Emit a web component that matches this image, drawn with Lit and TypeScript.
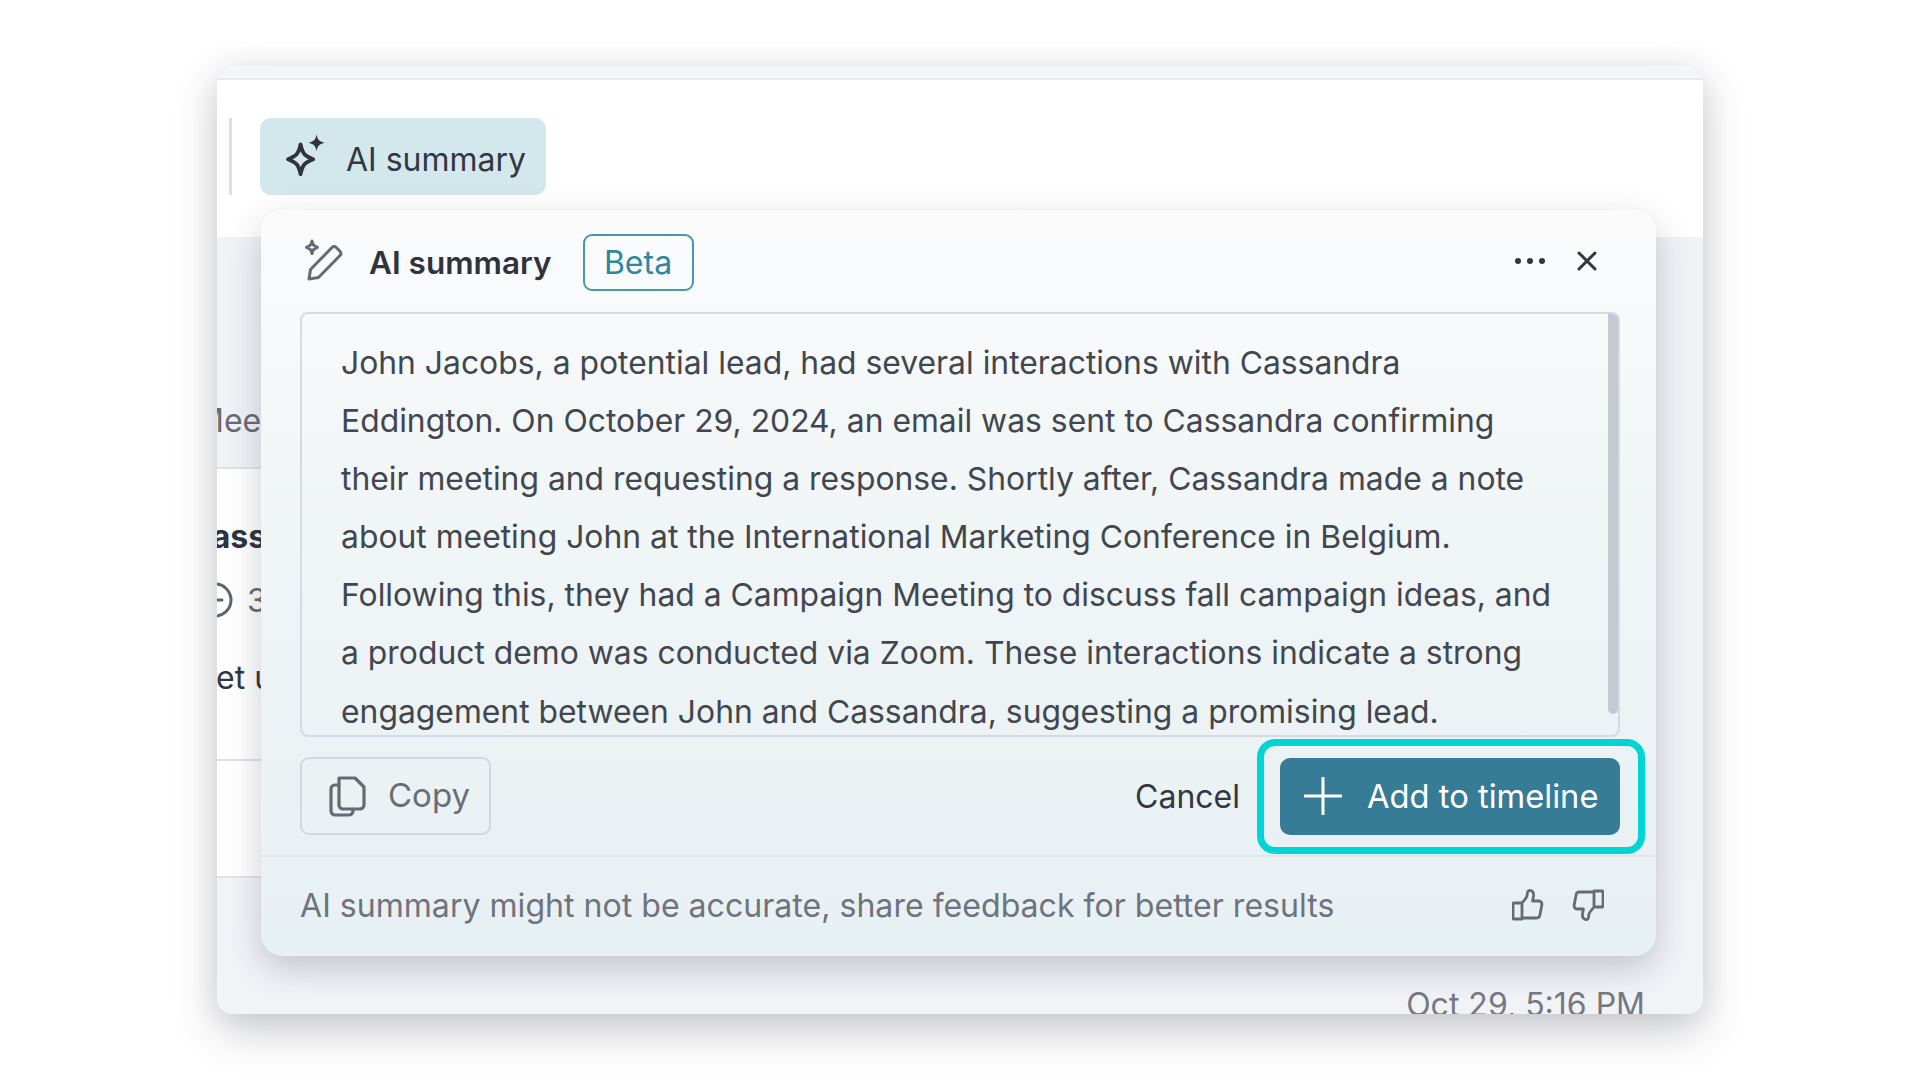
import { LitElement, html, svg, css } from "lit";
import { customElement } from "lit/decorators.js";

const LINES = [
  "John Jacobs, a potential lead, had several interactions with Cassandra",
  "Eddington. On October 29, 2024, an email was sent to Cassandra confirming",
  "their meeting and requesting a response. Shortly after, Cassandra made a note",
  "about meeting John at the International Marketing Conference in Belgium.",
  "Following this, they had a Campaign Meeting to discuss fall campaign ideas, and",
  "a product demo was conducted via Zoom. These interactions indicate a strong",
  "engagement between John and Cassandra, suggesting a promising lead.",
];

const thumb = svg`<path d="M10 14l4-5c1-1.200 1.400-3 1.400-5 0-2 2-3 3.800-2.200 2 .9 2.600 3 2.300 5.200l-.9 5h6.200c2.200 0 3.400 1.800 3 4l-2 10.600c-.3 1.600-1.500 2.400-3 2.400H10zM2 14h8v16H2c-.6 0-1-.4-1-1V15c0-.6.4-1 1-1z"/>`;

@customElement("app-root")
export class AppRoot extends LitElement {
  static styles = css`
    :host { display: block; width: 1920px; height: 1080px; background: #fff; overflow: hidden; font-family: "Inter", "Noto Sans", sans-serif; color: #33373f; padding: 66px 0 0 217px; box-sizing: border-box; }
    svg { display: block; flex: none; fill: none; stroke-linecap: round; stroke-linejoin: round; }
    .window { position: relative; width: 1486px; height: 948px; border-radius: 16px; background: #f1f2f6; box-shadow: 0 18px 44px rgba(45, 50, 65, .24), 0 0 30px rgba(45, 50, 65, .08); }
    .clip { display: flex; flex-direction: column; height: 100%; border-radius: 16px; overflow: hidden; }
    .strip { height: 12px; flex: none; background: #f3f5f9; border-bottom: 2px solid #e9ebf0; }
    .toolbar { height: 157px; flex: none; background: #fff; display: flex; align-items: flex-start; padding: 38px 0 0 12px; box-sizing: border-box; }
    .rule { width: 3px; height: 77px; background: #dcdfe6; }
    .chip { margin-left: 28px; width: 286px; height: 77px; background: #d3e8ed; border-radius: 11px; display: flex; align-items: center; padding-left: 21px; gap: 19px; box-sizing: border-box; font-size: 32px; color: #33373f; }
    .chip span { padding-top: 5px; }
    .row { flex: none; width: 800px; box-sizing: border-box; overflow: hidden; white-space: nowrap; color: #676b73; font-size: 32px; }
    .r1 { height: 232px; background: #f1f2f6; border-bottom: 2px solid #e0e2e8; padding: 164px 0 0 0; }
    .r1 span { display: block; margin-left: -22px; }
    .r2 { height: 292px; background: #fff; border-bottom: 2px solid #e0e2e8; padding: 48px 0 0 0; display: flex; flex-direction: column; }
    .r2 b { color: #2f333b; font-weight: 700; margin-left: -29px; }
    .meta { display: flex; align-items: center; margin: 24px 0 0 -22px; gap: 12px; height: 40px; }
    .set { margin: 38px 0 0 -1px; color: #33373f; }
    .r3 { height: 117px; background: #fff; border-bottom: 2px solid #e0e2e8; }
    .r4 { flex: 1; width: auto; display: flex; justify-content: flex-end; padding: 107px 58px 0 0; color: #757982; background: #f2f3f7; font-size: 32px; overflow: visible; }
    .panel { position: absolute; left: 44px; top: 144px; width: 1395px; height: 746px; border-radius: 22px; background: linear-gradient(180deg, #fbfbfc 0%, #f2f6f7 35%, #e7f0f3 100%); box-shadow: 0 12px 34px rgba(45, 50, 65, .24); display: flex; flex-direction: column; }
    .head { height: 102px; flex: none; display: flex; align-items: center; padding: 0 0 0 41px; box-sizing: border-box; }
    .title { font-weight: 600; font-size: 31.500px; margin: 2px 0 0 23px; color: #2f333b; }
    .beta { margin: 2px 0 0 31px; width: 111px; height: 57px; box-sizing: border-box; border: 2px solid #4b96ac; border-radius: 9px; color: #2f86a0; font-size: 32px; display: flex; align-items: center; justify-content: center; }
    .more { margin-left: auto; }
    .close { margin: 0 58px 0 30px; }
    .box { margin: 0 36px 0 39px; height: 425px; flex: none; box-sizing: border-box; border: 2px solid #d6dae2; border-radius: 8px; padding: 20px 0 0 39px; position: relative; overflow: hidden; }
    .line { height: 58.100px; line-height: 58.100px; font-size: 31.850px; white-space: nowrap; color: #42464e; }
    .scroll { position: absolute; top: -2px; right: 0; width: 10px; height: 402px; background: #c5c9d2; border-radius: 0 4px 5px 5px; }
    .actions { height: 120px; flex: none; display: flex; align-items: center; padding: 0 36px 0 39px; border-bottom: 2px solid #dfe4ea; box-sizing: border-box; }
    .copy { width: 191px; height: 78px; box-sizing: border-box; border: 2px solid #d3d8de; border-radius: 9px; display: flex; align-items: center; padding-left: 27px; gap: 21px; color: #696d76; font-size: 33px; }
    .copy span { margin-top: -3px; }
    .cancel { margin: 0 40px 0 auto; font-size: 32px; color: #33373f; }
    .add { position: relative; width: 340px; height: 77px; background: #367c97; border-radius: 10px; display: flex; align-items: center; padding-left: 24px; box-sizing: border-box; gap: 25px; color: #fff; font-size: 32.700px; }
    .mark { position: absolute; left: -23px; right: -25px; top: -19px; bottom: -19px; border: 7px solid #00d4d4; border-radius: 18px; pointer-events: none; }
    .foot { flex: 1; display: flex; align-items: center; padding: 0 52px 0 39px; color: #6f737c; font-size: 32.100px; }
    .foot span { margin-top: -2px; }
    .up { margin-left: auto; margin-top: -4px; }
    .down { margin: -4px 0 0 28px; transform: rotate(180deg); }
  `;

  render() {
    return html`
      <div class="window">
        <div class="clip">
          <div class="strip"></div>
          <div class="toolbar">
            <div class="rule"></div>
            <div class="chip">
              <svg width="46" height="48" viewBox="0 0 40 42">
                <path d="M17 10c1.600 8 3.500 10 11 13-7.500 3-9.400 5-11 13-1.600-8-3.500-10-11-13 7.500-3 9.400-5 11-13z" stroke="#2f3540" stroke-width="3.400"/>
                <path d="M31 1c.9 4.800 2 6 7 7.500-5 1.500-6.100 2.700-7 7.500-.9-4.800-2-6-7-7.500 5-1.500 6.100-2.700 7-7.500z" fill="#2f3540"/>
              </svg>
              <span>AI summary</span>
            </div>
          </div>
          <div class="row r1"><span>Mee</span></div>
          <div class="row r2">
            <b>Cass</b>
            <div class="meta">
              <svg width="40" height="40" viewBox="0 0 40 40"><circle cx="20" cy="20" r="16" stroke="#5f636b" stroke-width="3"/><path d="M20 13v7h7" stroke="#5f636b" stroke-width="3"/></svg>
              <span>3</span>
            </div>
            <span class="set">et u</span>
          </div>
          <div class="row r3"></div>
          <div class="row r4"><span>Oct 29, 5:16 PM</span></div>
        </div>

        <div class="panel">
          <div class="head">
            <svg width="44" height="46" viewBox="0 0 44 46">
              <path d="M10 3c.8 3.800 1.800 4.800 5.500 6.300-3.700 1.500-4.700 2.500-5.500 6.300-.8-3.800-1.800-4.800-5.500-6.300 3.700-1.500 4.700-2.500 5.500-6.300z" stroke="#666a73" stroke-width="3"/>
              <path d="M7 41l1.500-9.500L30 9.500a3 3 0 0 1 4.300 0l3.700 3.700a3 3 0 0 1 0 4.300L16.500 39.500z" stroke="#666a73" stroke-width="3"/>
            </svg>
            <span class="title">AI summary</span>
            <span class="beta">Beta</span>
            <svg class="more" width="32" height="8" viewBox="0 0 32 8"><g fill="#33373f"><circle cx="4" cy="4" r="3"/><circle cx="16" cy="4" r="3"/><circle cx="28" cy="4" r="3"/></g></svg>
            <svg class="close" width="22" height="22" viewBox="0 0 22 22"><path d="M3 3l16 16M19 3L3 19" stroke="#33373f" stroke-width="3"/></svg>
          </div>
          <div class="box">
            ${LINES.map((l) => html`<div class="line">${l}</div>`)}
            <div class="scroll"></div>
          </div>
          <div class="actions">
            <div class="copy">
              <svg width="38" height="42" viewBox="0 0 38 42">
                <path d="M10 3h16l9 9v18a4 4 0 0 1-4 4H14a4 4 0 0 1-4-4z" stroke="#666a73" stroke-width="3.200"/>
                <path d="M10 10H6a4 4 0 0 0-4 4v22a4 4 0 0 0 4 4h14a4 4 0 0 0 4-4v-2" stroke="#666a73" stroke-width="3.200"/>
              </svg>
              <span>Copy</span>
            </div>
            <span class="cancel">Cancel</span>
            <div class="add">
              <svg width="38" height="38" viewBox="0 0 38 38"><path d="M19 1v36M1 19h36" stroke="#fff" stroke-width="3"/></svg>
              <span>Add to timeline</span>
              <div class="mark"></div>
            </div>
          </div>
          <div class="foot">
            <span>AI summary might not be accurate, share feedback for better results</span>
            <svg class="up" width="32" height="32" viewBox="0 0 32 32" stroke="#666a73" stroke-width="2.800">${thumb}</svg>
            <svg class="down" width="32" height="32" viewBox="0 0 32 32" stroke="#666a73" stroke-width="2.800">${thumb}</svg>
          </div>
        </div>
      </div>
    `;
  }
}
